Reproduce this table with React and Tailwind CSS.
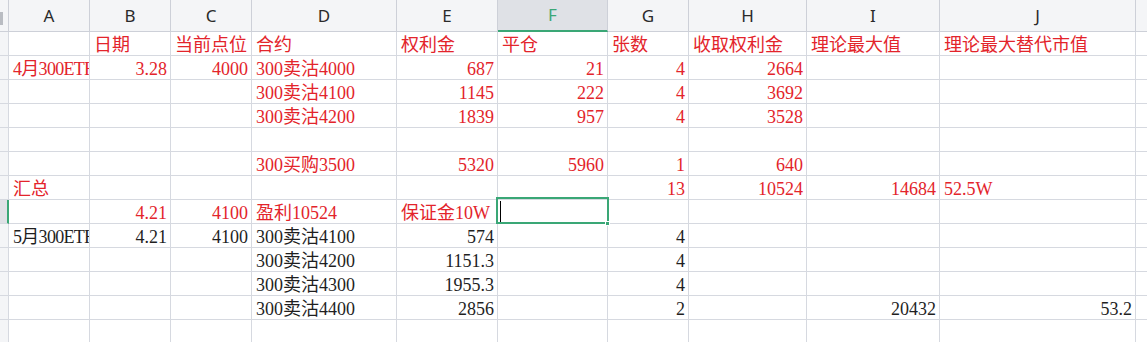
import React from "react";

const R = "text-[#e3242b]";
const K = "text-[#1f1f1f]";

// each row: array of [text, alignRight, color] for columns A..J
const rows = [
  [["", 0, R], ["日期", 0, R], ["当前点位", 0, R], ["合约", 0, R], ["权利金", 0, R], ["平仓", 0, R], ["张数", 0, R], ["收取权利金", 0, R], ["理论最大值", 0, R], ["理论最大替代市值", 0, R]],
  [["4月300ETF", 0, R], ["3.28", 1, R], ["4000", 1, R], ["300卖沽4000", 0, R], ["687", 1, R], ["21", 1, R], ["4", 1, R], ["2664", 1, R], ["", 0, R], ["", 0, R]],
  [["", 0, R], ["", 0, R], ["", 0, R], ["300卖沽4100", 0, R], ["1145", 1, R], ["222", 1, R], ["4", 1, R], ["3692", 1, R], ["", 0, R], ["", 0, R]],
  [["", 0, R], ["", 0, R], ["", 0, R], ["300卖沽4200", 0, R], ["1839", 1, R], ["957", 1, R], ["4", 1, R], ["3528", 1, R], ["", 0, R], ["", 0, R]],
  [["", 0, R], ["", 0, R], ["", 0, R], ["", 0, R], ["", 0, R], ["", 0, R], ["", 0, R], ["", 0, R], ["", 0, R], ["", 0, R]],
  [["", 0, R], ["", 0, R], ["", 0, R], ["300买购3500", 0, R], ["5320", 1, R], ["5960", 1, R], ["1", 1, R], ["640", 1, R], ["", 0, R], ["", 0, R]],
  [["汇总", 0, R], ["", 0, R], ["", 0, R], ["", 0, R], ["", 0, R], ["", 0, R], ["13", 1, R], ["10524", 1, R], ["14684", 1, R], ["52.5W", 0, R]],
  [["", 0, R], ["4.21", 1, R], ["4100", 1, R], ["盈利10524", 0, R], ["保证金10W", 0, R], ["", 0, R], ["", 0, R], ["", 0, R], ["", 0, R], ["", 0, R]],
  [["5月300ETF", 0, K], ["4.21", 1, K], ["4100", 1, K], ["300卖沽4100", 0, K], ["574", 1, K], ["", 0, K], ["4", 1, K], ["", 0, K], ["", 0, K], ["", 0, K]],
  [["", 0, K], ["", 0, K], ["", 0, K], ["300卖沽4200", 0, K], ["1151.3", 1, K], ["", 0, K], ["4", 1, K], ["", 0, K], ["", 0, K], ["", 0, K]],
  [["", 0, K], ["", 0, K], ["", 0, K], ["300卖沽4300", 0, K], ["1955.3", 1, K], ["", 0, K], ["4", 1, K], ["", 0, K], ["", 0, K], ["", 0, K]],
  [["", 0, K], ["", 0, K], ["", 0, K], ["300卖沽4400", 0, K], ["2856", 1, K], ["", 0, K], ["2", 1, K], ["", 0, K], ["20432", 1, K], ["53.2", 1, K]],
  [["", 0, K], ["", 0, K], ["", 0, K], ["", 0, K], ["", 0, K], ["", 0, K], ["", 0, K], ["", 0, K], ["", 0, K], ["", 0, K]],
];

const letters = ["A", "B", "C", "D", "E", "F", "G", "H", "I", "J"];

function Cell({ t, right, color, selected, tight }) {
  return (
    <div
      className={
        "relative h-[24px] border-r border-b border-[#d6d9e0] whitespace-nowrap flex items-end " + color
      }
    >
      <div className="absolute inset-0 overflow-hidden flex items-end">
        <div className={"w-full flex items-end pb-[1px] " + (right ? "justify-end pr-[3px]" : "justify-start pl-[4px]")}>
          <span className={tight ? "leading-none tracking-[-0.7px]" : "leading-none"}>{t}</span>
        </div>
      </div>
      {selected && (
        <>
          <div className="absolute left-[-2px] top-[-3px] w-[113px] h-[27px] border-2 border-[#3aa776] z-10" />
          <div className="absolute left-[2px] top-[1px] w-[1px] h-[21px] bg-black z-10" />
          <div className="absolute left-[107px] top-[21px] w-[5px] h-[5px] bg-[#3aa776] border border-white z-20" />
        </>
      )}
    </div>
  );
}

export default function App() {
  return (
    <div
      className="w-[1147px] h-[342px] overflow-hidden bg-white text-[18px]"
      style={{ fontFamily: '"Liberation Serif", "Noto Sans CJK SC", serif' }}
    >
      <div className="grid grid-cols-[9px_81px_81px_81px_145px_101px_110px_81px_118px_133px_196px_1fr]">
        {/* header row */}
        <div className="h-[32px] bg-[#f4f5f7] border-r border-b border-[#cdd0d8] flex items-center">
          <div className="w-[3px] h-[13px] bg-[#b9bcc2] mt-[6px]" />
        </div>
        {letters.map((l) =>
          l === "F" ? (
            <div
              key={l}
              className="h-[32px] bg-[#dfe1e6] border-r border-[#cdd0d8] border-b-2 border-b-[#3aa776] flex items-center justify-center text-[17px] text-[#3aa776]"
              style={{ fontFamily: '"Noto Sans", sans-serif' }}
            >
              {l}
            </div>
          ) : (
            <div
              key={l}
              className="h-[32px] bg-[#f4f5f7] border-r border-b border-[#cdd0d8] flex items-center justify-center text-[17px] text-[#2a2a2a]"
              style={{ fontFamily: '"Noto Sans", sans-serif' }}
            >
              {l}
            </div>
          )
        )}
        <div className="h-[32px] bg-[#f4f5f7] border-b border-[#cdd0d8]" />

        {rows.map((row, ri) => (
          <React.Fragment key={ri}>
            {ri === 7 ? (
              <div className="h-[24px] bg-[#dfe1e6] border-r-2 border-r-[#3aa776] border-b border-b-[#d6d9e0]" />
            ) : (
              <div className="h-[24px] bg-[#f4f5f7] border-r border-b border-[#d6d9e0]" />
            )}
            {row.map((c, ci) => (
              <Cell
                key={ci}
                t={c[0]}
                right={c[1]}
                color={c[2]}
                selected={ri === 7 && ci === 5}
                tight={ci === 0 && c[0].includes("ETF")}
              />
            ))}
            <div className="h-[24px] border-b border-[#d6d9e0]" />
          </React.Fragment>
        ))}
      </div>
    </div>
  );
}
